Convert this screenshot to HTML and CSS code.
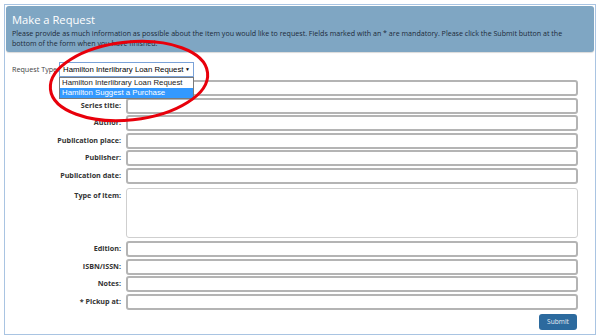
FILE: index.html
```html
<!DOCTYPE html>
<html>
  <head>
    <title>Make a Request</title>
    <link rel="stylesheet" href="styles.css">
  </head>
  <body>
    <div class="panel">
      <div class="header">
        <h1>Make a Request</h1>
        <p>Please provide as much information as possible about the item you would like to request. Fields marked with an * are mandatory. Please click the Submit button at the bottom of the form when you have finished.</p>
      </div>
      <form class="form">
        <div class="type-row">
          <label class="type-label">Request Type:</label>
          <div class="select">
            <span>Hamilton Interlibrary Loan Request</span>
            <span class="arrow">&#9660;</span>
            <ul class="options">
              <li>Hamilton Interlibrary Loan Request</li>
              <li class="selected">Hamilton Suggest a Purchase</li>
            </ul>
          </div>
        </div>
        <div class="row"><label></label><div class="field"></div></div>
        <div class="row"><label>Series title:</label><div class="field"></div></div>
        <div class="row"><label>Author:</label><div class="field"></div></div>
        <div class="row"><label>Publication place:</label><div class="field"></div></div>
        <div class="row"><label>Publisher:</label><div class="field"></div></div>
        <div class="row"><label>Publication date:</label><div class="field"></div></div>
        <div class="row tall"><label>Type of item:</label><div class="field area"></div></div>
        <div class="row"><label>Edition:</label><div class="field"></div></div>
        <div class="row"><label>ISBN/ISSN:</label><div class="field"></div></div>
        <div class="row"><label>Notes:</label><div class="field"></div></div>
        <div class="row"><label>* Pickup at:</label><div class="field"></div></div>
        <div class="actions"><button type="button" class="submit">Submit</button></div>
      </form>
      <svg class="circle" width="172" height="90" viewBox="0 0 172 90">
        <ellipse cx="86" cy="45" rx="79" ry="39" transform="rotate(-6 86 45)" fill="none" stroke="#e8000b" stroke-width="3"/>
      </svg>
    </div>
  </body>
</html>
```

FILE: styles.css
```css
body {
  margin: 0;
  background-color: #fff;
  font-family: "Open Sans", sans-serif;
}
.panel {
  position: relative;
  margin: 4px 4px 3px 4px;
  height: 327px;
  border: 1px solid #a9c4e2;
  padding: 1px;
}
.header {
  background-color: #7fa6c3;
  border-radius: 3px;
  height: 46px;
  padding: 6px 6px 0 6px;
  box-sizing: border-box;
  box-shadow: 0 1px 1px rgba(0, 0, 0, 0.15);
}
.header h1 {
  margin: 0;
  font-size: 11.2px;
  font-weight: normal;
  color: #fff;
  line-height: 15px;
}
.header p {
  margin: 1px 0 0 0;
  font-size: 7.1px;
  line-height: 10px;
  color: #1c2a3a;
}
.form {
  padding-top: 9px;
}
.type-row {
  display: flex;
  align-items: center;
  height: 16px;
  padding-left: 6px;
}
.type-label {
  flex-shrink: 0;
  white-space: nowrap;
  font-size: 7.2px;
  color: #444;
  width: 47px;
}
.select {
  position: relative;
  flex-shrink: 0;
  display: flex;
  align-items: center;
  justify-content: space-between;
  width: 135px;
  height: 15px;
  box-sizing: border-box;
  border: 1px solid #7aa2d8;
  padding: 0 3px 0 3px;
  font-family: "Liberation Sans", Arial, sans-serif;
  font-size: 7.8px;
  white-space: nowrap;
  color: #000;
  background-color: #fff;
}
.arrow {
  font-size: 5px;
}
.options {
  position: absolute;
  left: -1px;
  top: 14px;
  width: 135px;
  margin: 0;
  padding: 0;
  list-style: none;
  border: 1px solid #7a7a7a;
  background-color: #fff;
  z-index: 2;
  box-sizing: border-box;
}
.options li {
  height: 10px;
  line-height: 10px;
  padding-left: 2px;
  font-size: 7.8px;
  color: #222;
}
.options li.selected {
  background-color: #3399ff;
  color: #fff;
}
.row {
  display: grid;
  grid-template-columns: 115px 452px;
  column-gap: 5px;
  margin-top: 1.6px;
}
.row:nth-child(2) {
  margin-top: 3px;
}
.row label {
  text-align: right;
  font-size: 7.2px;
  font-weight: bold;
  color: #333;
  line-height: 14px;
  white-space: nowrap;
}
.field {
  height: 16px;
  box-sizing: border-box;
  border: 2px solid #b4b4b4;
  border-radius: 3px;
  background-color: #fff;
}
.row.tall {
  margin-top: 4px;
}
.field.area {
  height: 50px;
  border: 1px solid #cfcfcf;
}
.row.tall + .row {
  margin-top: 3px;
}
.actions {
  display: flex;
  justify-content: flex-end;
  padding-right: 17px;
  margin-top: 4px;
}
.submit {
  width: 38px;
  height: 16px;
  padding: 0;
  border: none;
  border-radius: 3px;
  background-color: #2c6a9e;
  color: #e8eef5;
  font-family: "Open Sans", sans-serif;
  font-size: 6.6px;
}
.circle {
  position: absolute;
  left: 38px;
  top: 31px;
  z-index: 3;
}
```
